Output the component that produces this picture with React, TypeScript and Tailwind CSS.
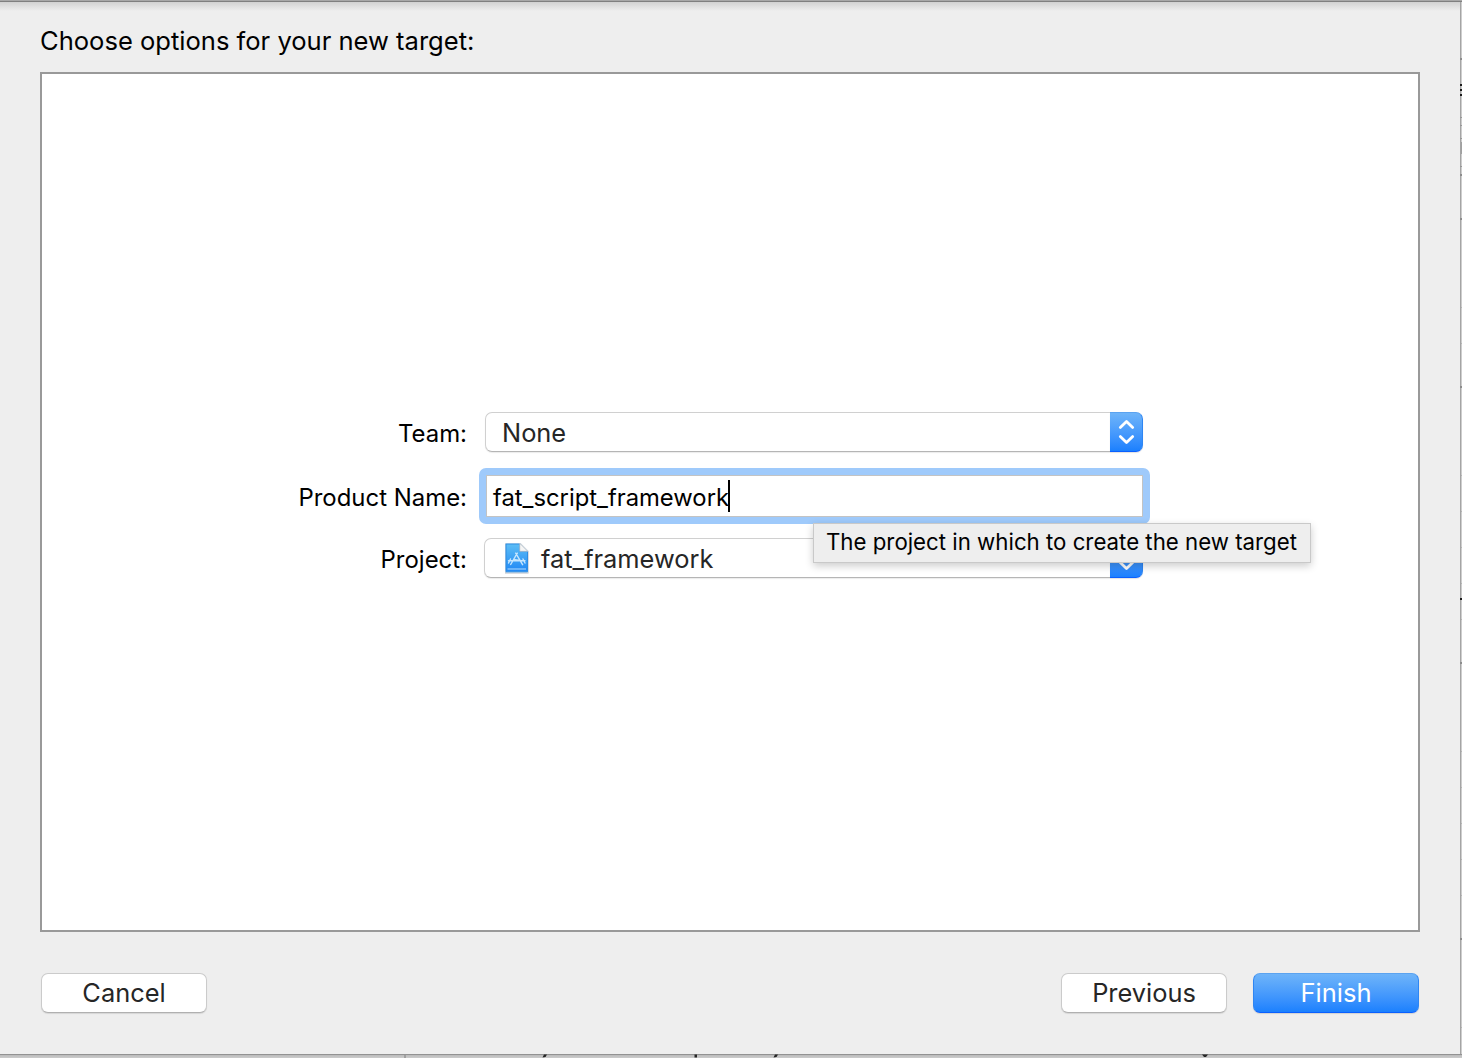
import React from "react";

function SheetButton({ label, primary = false }: { label: string; primary?: boolean }) {
  return (
    <button
      className={
        primary
          ? "flex h-10 w-[166px] items-center justify-center rounded-[7px] border border-t-[#5ba3f0] border-x-[#2f86f3] border-b-[#0a60ff] bg-linear-to-b from-[#6eb4f9] to-[#1a80fe] text-[25.5px] leading-[38px] text-white shadow-[0_1px_1px_rgba(0,0,0,0.12)]"
          : "flex h-10 w-[166px] items-center justify-center rounded-[7px] border border-[#cbcbcb] border-b-[#b0b0b0] bg-white text-[25.4px] leading-[38px] text-[#262626] shadow-[0_1px_1px_rgba(0,0,0,0.1)]"
      }
    >
      {label}
    </button>
  );
}

function Popup({ children, className }: { children: React.ReactNode; className: string }) {
  return (
    <div className={className}>
      <div className="flex min-w-0 flex-1 items-center rounded-l-[7px] border border-r-0 border-[#d0d0d0] border-b-[#b5b5b5] bg-white text-[25.4px] leading-[38px] text-[#262626] shadow-[0_1px_1px_rgba(0,0,0,0.08)]">
        {children}
      </div>
      <div className="flex w-[33px] items-center justify-center rounded-r-[7px] border border-l-0 border-t-[#5ba3f0] border-r-[#2f86f3] border-b-[#0a60ff] bg-linear-to-b from-[#6eb4f9] to-[#1a80fe] shadow-[0_1px_1px_rgba(0,0,0,0.12)]">
        <svg width="18" height="26" viewBox="0 0 18 26" fill="none" stroke="white" strokeWidth="2.8" strokeLinecap="round" strokeLinejoin="round">
          <path d="M3.300 8.400 9.500 2.400l6.200 6M3.300 17.600 9.500 23.600l6.200-6" />
        </svg>
      </div>
    </div>
  );
}

function ProjectIcon() {
  return (
    <svg width="26" height="32" viewBox="0 0 26 32" fill="none">
      <defs>
        <linearGradient id="sheet" x1="0" y1="0" x2="0" y2="1">
          <stop offset="0" stopColor="#5cbdf5" />
          <stop offset="1" stopColor="#2088f5" />
        </linearGradient>
      </defs>
      <path d="M1 1h15.5l8 8V31.600H1z" fill="#b5bcc4" />
      <path d="M1.500 1.200h14.700l7.800 7.800v21.500H1.500z" fill="#e6f3fd" />
      <path d="M2 2h13.800v7.500H23.500v20.300H2z" fill="url(#sheet)" stroke="#2f8de2" strokeWidth="1" />
      <path d="M15.800 1.500v7.800h7.800z" fill="#f5f5f5" stroke="#b5bec6" strokeWidth=".7" />
      <path d="M3.500 27h18.500" stroke="#b4dcfc" strokeWidth="1" />
      <g stroke="#c6e6fe" strokeWidth="1.400" strokeLinecap="round">
        <path d="m13.300 11.200-6.600 11.300M11.700 11.200l6.900 11.500M4.500 18.800h16.500M6.500 17l-2 4M19 17l2 4M9.500 17.500l6.500 1" />
      </g>
    </svg>
  );
}

const faintRows = [307, 343, 475, 511, 547, 583, 619, 751, 787, 823, 859, 895, 1027];
const darkRows = [59, 175, 219, 387, 663, 939];
const midRows = [117, 125, 138, 166];
const inkRows = [84, 89, 94, 598];

export default function App() {
  return (
    <div className="relative flex h-[1058px] w-[1462px] flex-col overflow-hidden bg-[#c8c8c8] font-[Inter,sans-serif] text-black">
      <div className="h-0.5 shrink-0 border-b border-[#808080] bg-[#a8a8a8]" />
      <div className="flex h-[1052px] shrink-0">
        <main className="flex w-[1460px] flex-col bg-[#eeeeee] bg-[linear-gradient(to_bottom,#d2d2d2_0px,#e2e2e2_5px,#eeeeee_9px)] px-10">
          <h1 className="mt-[19px] h-[51px] text-[25.550px] leading-10 whitespace-nowrap">
            <span>Choose options for your new target:</span>
          </h1>

          <section className="relative h-[860px] shrink-0 border-2 border-[#999999] bg-white pt-[338px]">
            <div className="flex h-10">
              <label className="w-[425px] text-right text-[23.900px] leading-[44px]"><span>Team:</span></label>
              <Popup className="ml-[18px] flex w-[658px]">
                <span className="ml-4 pt-0.5">None</span>
              </Popup>
            </div>

            <div className="mt-4 flex h-14">
              <label className="w-[425px] text-right text-[23.950px] leading-[60px]"><span>Product Name:</span></label>
              <div className="ml-3 flex w-[671px] rounded-[7px] bg-[#9fcafb] p-[7px]">
                <div className="flex flex-1 items-center border border-[#c3c3c3] bg-white pl-1.5 text-[23.800px] leading-10">
                  <span className="pt-1">fat_script_framework</span>
                  <span className="-ml-px h-8 w-0.5 bg-black" />
                </div>
              </div>
            </div>

            <div className="mt-3.5 flex h-10">
              <label className="w-[425px] text-right text-[23.950px] leading-[44px]"><span>Project:</span></label>
              <Popup className="ml-[17px] flex w-[659px]">
                <span className="ml-[19px] flex h-8 items-center"><ProjectIcon /></span>
                <span className="ml-[11px] pt-0.5">fat_framework</span>
              </Popup>
            </div>

            <div role="tooltip" className="absolute top-[449px] left-[771px] h-10 w-[498px] border border-[#c9c9c9] bg-[#eeeeee] pl-3 text-[22.250px] leading-[36px] whitespace-nowrap shadow-[0_3px_8px_rgba(0,0,0,0.2)]">
              <span>The project in which to create the new target</span>
            </div>
          </section>

          <footer className="mt-[41px] flex px-px">
            <SheetButton label="Cancel" />
            <div className="ml-auto flex gap-[26px]">
              <SheetButton label="Previous" />
              <SheetButton label="Finish" primary />
            </div>
          </footer>
        </main>
        <aside className="w-0.5 border-l border-[#a4a4a4] bg-[#cecece]" />
      </div>
      <div className="h-1 shrink-0 border-t border-[#929292] bg-linear-to-b from-[#bababa] to-[#cccccc]" />

      <svg className="absolute top-0 right-0" width="2" height="1058" viewBox="0 0 2 1058" shapeRendering="crispEdges">
        {faintRows.map((y) => <path key={y} d={`M1 ${y}h1v1h-1z`} fill="#b4b4b4" />)}
        {midRows.map((y) => <path key={y} d={`M0 ${y}h2v1h-2z`} fill="#989898" />)}
        {darkRows.map((y) => <path key={y} d={`M0 ${y - 1}h2v2h-2z`} fill="#8c8c8c" />)}
        {inkRows.map((y) => <path key={y} d={`M0 ${y}h2v2h-2z`} fill="#1c1c1c" />)}
        <path d="M1 142h1v12h-1z" fill="#a0a0a0" />
      </svg>
      <svg className="absolute bottom-0 left-0" width="1462" height="4" viewBox="0 0 1462 4">
        <path d="M404 1h2v3h-2z" fill="#a0a0a0" />
        <path d="M544 .5h3l-1.500 2.500-3 .5zM694.500 .5h2.500v3h-2.500zM775 .5h3l-1.500 2.500-3 .5zM1202 .5h6l-2 2.500h-2z" fill="#262626" />
      </svg>
    </div>
  );
}
